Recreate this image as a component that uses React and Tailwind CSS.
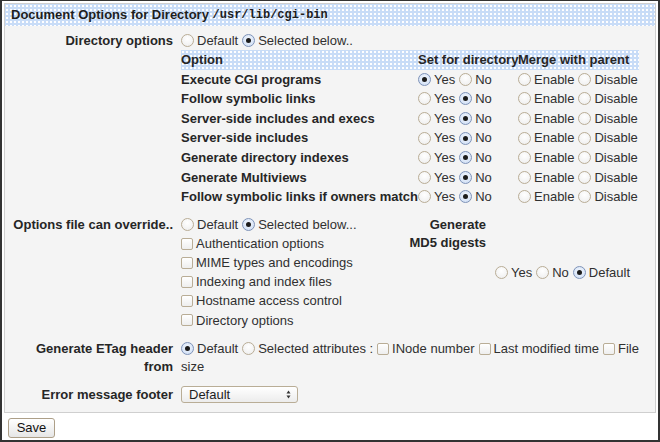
import React from 'react';

const font = { fontFamily: '"Liberation Sans", Arial, sans-serif' };

const Radio = ({ checked }) => (
  <span
    className={`inline-flex items-center justify-center w-[13px] h-[13px] rounded-full border shrink-0 ${
      checked
        ? 'border-[#7f93b8] bg-[radial-gradient(circle_at_50%_40%,#f4f8fe,#c9daf3)]'
        : 'border-[#b9ad96] bg-[radial-gradient(circle_at_50%_35%,#ffffff,#ececec)]'
    }`}
  >
    {checked && <span className="w-[5px] h-[5px] rounded-full bg-[#1c1c1c]" />}
  </span>
);

const Check = () => (
  <span className="inline-block w-[12px] h-[12px] rounded-[2px] border border-[#b9ad96] bg-[linear-gradient(#ffffff,#eeeeee)] shrink-0" />
);

const Opt = ({ checked, label, box }) => (
  <span className="inline-flex items-center mr-[4px] whitespace-nowrap">
    {box ? <Check /> : <Radio checked={checked} />}
    <span className="ml-[3px]">{label}</span>
  </span>
);

const rows = [
  ['Execute CGI programs', true],
  ['Follow symbolic links', false],
  ['Server-side includes and execs', false],
  ['Server-side includes', false],
  ['Generate directory indexes', false],
  ['Generate Multiviews', false],
  ['Follow symbolic links if owners match', false],
];

const Label = ({ children }) => (
  <div className="w-[168px] text-right font-bold text-[#262626] shrink-0">{children}</div>
);

export default function App() {
  return (
    <div
      style={font}
      className="w-[660px] h-[442px] bg-white border-t border-x-2 border-b-2 border-[#333333] p-[2px] text-[13px] text-[#303030] overflow-hidden"
    >
      <div className="border border-[#cfcfcf] bg-[#f4f4f4]">
        <div className="h-[22px] flex items-center px-[6px] font-bold text-[#1e1e1e] bg-[#c8dcf7] bg-[radial-gradient(#ffffff_0.7px,transparent_1px)] bg-[length:4px_4px]">
          Document Options for Directory&nbsp;
          <span style={{ fontFamily: '"Liberation Mono", monospace' }} className="text-[12px]">
            /usr/lib/cgi-bin
          </span>
        </div>

        <div className="pt-[5px] pb-[8px]">
          {/* Directory options */}
          <div className="flex">
            <Label>
              <div className="h-[19px] leading-[19px]">Directory options</div>
            </Label>
            <div className="ml-[8px] flex-1">
              <div className="h-[19px] flex items-center">
                <Opt label="Default" />
                <Opt checked label="Selected below.." />
              </div>
              <div className="w-[458px]">
                <div className="h-[19.6px] flex items-center font-bold text-[#262626] bg-[#c8dcf7] bg-[radial-gradient(#ffffff_0.7px,transparent_1px)] bg-[length:4px_4px]">
                  <div className="w-[237px]">Option</div>
                  <div className="w-[100px] whitespace-nowrap">Set for directory</div>
                  <div className="w-[121px] whitespace-nowrap">Merge with parent</div>
                </div>
                {rows.map(([name, yes]) => (
                  <div key={name} className="h-[19.6px] flex items-center">
                    <div className="w-[237px] font-bold text-[#262626] whitespace-nowrap">{name}</div>
                    <div className="w-[100px] flex items-center">
                      <Opt checked={yes} label="Yes" />
                      <Opt checked={!yes} label="No" />
                    </div>
                    <div className="w-[121px] flex items-center">
                      <Opt label="Enable" />
                      <Opt label="Disable" />
                    </div>
                  </div>
                ))}
              </div>
            </div>
          </div>

          {/* Options file can override */}
          <div className="flex mt-[8px]">
            <Label>
              <div className="h-[19.2px] leading-[19.2px]">Options file can override..</div>
            </Label>
            <div className="ml-[8px] flex">
              <div className="w-[220px]">
                <div className="h-[19.2px] flex items-center">
                  <Opt label="Default" />
                  <Opt checked label="Selected below..." />
                </div>
                {[
                  'Authentication options',
                  'MIME types and encodings',
                  'Indexing and index files',
                  'Hostname access control',
                  'Directory options',
                ].map((t) => (
                  <div key={t} className="h-[19.2px] flex items-center">
                    <Opt box label={t} />
                  </div>
                ))}
              </div>
              <div className="w-[85px] text-right font-bold text-[#262626] leading-[18px] pt-[1px]">
                Generate
                <br />
                MD5 digests
              </div>
              <div className="ml-[9px] flex items-center">
                <Opt label="Yes" />
                <Opt label="No" />
                <Opt checked label="Default" />
              </div>
            </div>
          </div>

          {/* ETag */}
          <div className="flex mt-[10px] leading-[18px]">
            <Label>
              Generate ETag header
              <br />
              from
            </Label>
            <div className="ml-[8px]">
              <div className="h-[18px] flex items-center">
                <Opt checked label="Default" />
                <Opt label="Selected attributes :" />
                <Opt box label="INode number" />
                <Opt box label="Last modified time" />
                <Opt box label="File" />
              </div>
              <div>size</div>
            </div>
          </div>

          {/* Error footer */}
          <div className="flex items-center mt-[10px] h-[18px]">
            <Label>Error message footer</Label>
            <div className="ml-[8px] w-[117px] h-[17px] flex items-center justify-between rounded-[3px] border border-[#b9ad96] bg-[linear-gradient(#ffffff,#ececec)] pl-[7px] pr-[6px] text-[#1e1e1e]">
              <span>Default</span>
              <svg width="5" height="9" viewBox="0 0 5 9">
                <path d="M2.5 0.5 L4.5 3.5 L0.5 3.5 Z" fill="#333" />
                <path d="M2.5 8.5 L4.5 5.5 L0.5 5.5 Z" fill="#333" />
              </svg>
            </div>
          </div>
        </div>
      </div>

      <button className="mt-[5px] ml-[4px] w-[47px] h-[20px] rounded-[3px] border border-[#ad9f88] bg-[linear-gradient(#ffffff,#e6e6e6)] text-[13px] text-[#111] leading-none">
        Save
      </button>
    </div>
  );
}
